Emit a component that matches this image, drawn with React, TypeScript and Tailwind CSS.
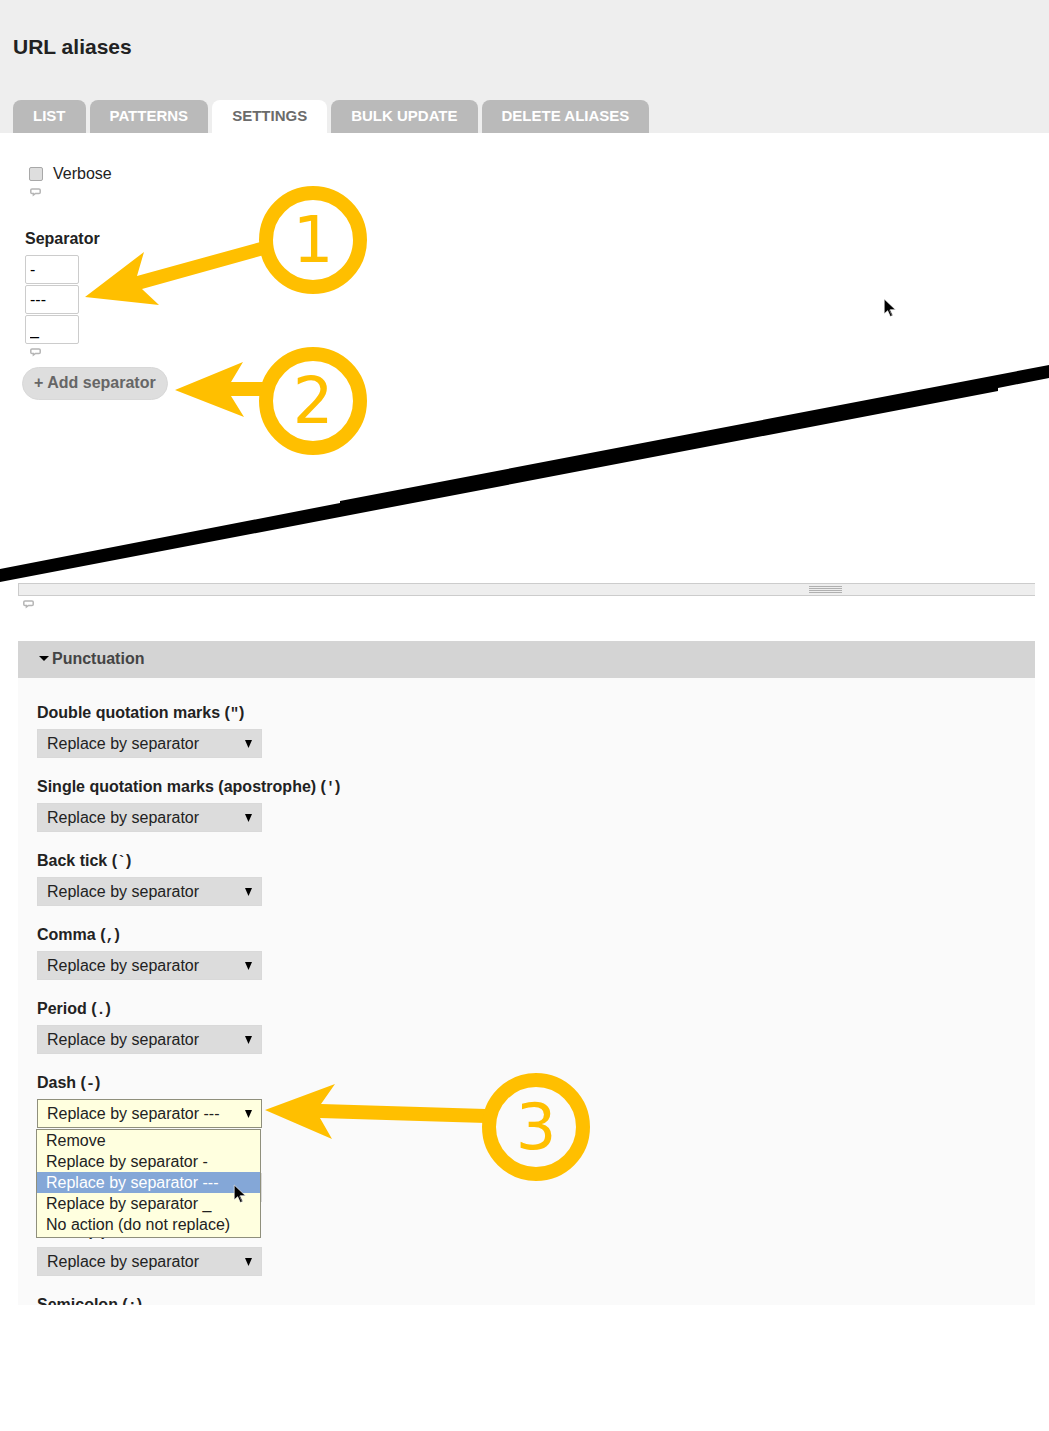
import { useState } from 'react';

const TABS = ['List', 'Patterns', 'Settings', 'Bulk update', 'Delete aliases'];

const OPTIONS = [
    'Remove',
    'Replace by separator',
    'Replace by separator -',
    'Replace by separator ---',
    'Replace by separator _',
    'No action (do not replace)',
];

const DASH_OPTIONS = OPTIONS.filter((option) => option !== 'Replace by separator');

const FIELDS = [
    { id: 'double-quotes', name: 'Double quotation marks', mark: '"' },
    { id: 'quotes', name: 'Single quotation marks (apostrophe)', mark: "'" },
    { id: 'backtick', name: 'Back tick', mark: '`' },
    { id: 'comma', name: 'Comma', mark: ',' },
    { id: 'period', name: 'Period', mark: '.' },
    { id: 'dash', name: 'Dash', mark: '-' },
    { id: 'underscore', name: 'Underscore', mark: '_' },
    { id: 'colon', name: 'Colon', mark: ':' },
];

function Bubble() {
    return (
        <svg className="block h-[9px] w-[11px]" viewBox="0 0 11 9" fill="none" stroke="#b5b5b5" strokeWidth="1.5" aria-hidden="true">
            <path d="M2 1h7q1.200 0 1.200 1v2.400q0 1-1.200 1H5.500L3.400 7V5.400H2q-1.200 0-1.200-1V2q0-1 1.200-1z" />
        </svg>
    );
}

function Pointer() {
    return (
        <svg className="block h-5 w-3.5" viewBox="0 0 13 19" aria-hidden="true">
            <path d="M1 1v14l3.300-3 2.500 5.600 2.400-1.100-2.500-5.400h5z" fill="#000" stroke="#fff" strokeWidth="0.600" />
            <path d="M6 11.500l2.200 5" stroke="#777" strokeWidth="0.800" />
        </svg>
    );
}

function Callout({ cx, cy, label, arrow }: { cx: number; cy: number; label: string; arrow: string }) {
    return (
        <g>
            <polygon points={arrow} fill="#ffbf00" />
            <circle cx={cx} cy={cy} r="47" fill="none" stroke="#ffbf00" strokeWidth="14" />
            <text x={cx} y={cy + 22} textAnchor="middle" className="font-['DejaVu_Sans',sans-serif] text-[64px]" fill="#ffbf00">
                {label}
            </text>
        </g>
    );
}

function MarkLabel({ id, name, mark }: { id: string; name: string; mark: string }) {
    return (
        <label htmlFor={id} className="block font-bold leading-[22px] text-[#222]">
            {name} (<code className="font-['Liberation_Mono',monospace] text-[15px] leading-none">{mark}</code>)
        </label>
    );
}

function Field({ id, name, mark }: { id: string; name: string; mark: string }) {
    const isOpen = id === 'dash';
    const [value, setValue] = useState(isOpen ? 'Replace by separator ---' : 'Replace by separator');

    return (
        <div className="relative">
            <MarkLabel id={id} name={name} mark={mark} />
            <div className="relative mt-[5px] w-[225px]">
                <select
                    id={id}
                    value={value}
                    onChange={(e) => setValue(e.target.value)}
                    className={
                        isOpen
                            ? 'block h-[29px] w-full appearance-none border border-[#8f8f7c] bg-[#ffffdf] pl-[9px] text-[#222] outline-none'
                            : 'block h-[29px] w-full appearance-none border border-[#d9d9d9] bg-[#dcdcdc] pl-[9px] text-[#222] outline-none'
                    }
                >
                    {OPTIONS.map((option) => (
                        <option key={option}>{option}</option>
                    ))}
                </select>
                <svg className="pointer-events-none absolute top-[11px] right-[10px] h-2 w-[7px]" viewBox="0 0 7 8" aria-hidden="true">
                    <path d="M0 0h7L3.500 8z" fill="#000" />
                </svg>
            </div>
            {isOpen && (
                <>
                    <ul role="listbox" aria-label="Dash" className="absolute top-full -left-px z-10 mt-px w-[225px] border border-[#8f8f7c] bg-[#ffffdf] pb-0.5">
                        {DASH_OPTIONS.map((option) => (
                            <li
                                key={option}
                                role="option"
                                aria-selected={option === value}
                                className={
                                    option === value
                                        ? 'bg-[#84a7d7] pl-[9px] leading-[21px] whitespace-nowrap text-white'
                                        : 'pl-[9px] leading-[21px] whitespace-nowrap text-[#222]'
                                }
                            >
                                {option}
                            </li>
                        ))}
                    </ul>
                    <div className="absolute top-[112px] left-[196px] z-20">
                        <Pointer />
                    </div>
                    <svg className="absolute -top-[5px] left-[223px] h-[120px] w-[340px]" viewBox="260 1067 340 120">
                        <Callout
                            cx={536}
                            cy={1127}
                            label="3"
                            arrow="265,1110 335,1084 321,1104 486,1109 486,1123 320,1118 332,1139"
                        />
                    </svg>
                </>
            )}
        </div>
    );
}

export default function App() {
    const [separators, setSeparators] = useState(['-', '---', '_']);
    const [open, setOpen] = useState(true);

    return (
        <div className="min-h-screen overflow-x-hidden bg-white font-['Liberation_Sans',Arial,sans-serif] text-base text-[#222]">
            <header className="bg-[#eee] px-[13px] pt-[33px]">
                <h1 className="text-[21px] leading-7 font-bold">URL aliases</h1>
                <nav className="mt-[39px] flex gap-1">
                    {TABS.map((tab) => (
                        <a
                            key={tab}
                            href="#"
                            className={
                                tab === 'Settings'
                                    ? 'h-[33px] rounded-t-lg bg-white px-5 text-[15px] leading-8 font-bold text-[#6b6b6b] uppercase'
                                    : 'h-[33px] rounded-t-lg bg-[#bababa] px-5 text-[15px] leading-8 font-bold text-white uppercase'
                            }
                        >
                            {tab}
                        </a>
                    ))}
                </nav>
            </header>

            <main className="relative">
                <section className="px-[25px] pt-[30px]">
                    <div className="flex items-center pl-1">
                        <input
                            id="verbose"
                            type="checkbox"
                            className="h-3.5 w-3.5 appearance-none rounded-xs border border-[#a8a8a8] bg-[#dedede] checked:bg-[#777]"
                        />
                        <label htmlFor="verbose" className="pl-2.5 leading-[22px]">
                            Verbose
                        </label>
                    </div>
                    <div className="mt-[3px] pl-[5px]">
                        <Bubble />
                    </div>

                    <fieldset className="mt-[31px]">
                        <legend className="leading-[22px] font-bold">Separator</legend>
                        <div className="mt-[5px] flex flex-col gap-px">
                            {separators.map((separator, i) => (
                                <input
                                    key={i}
                                    type="text"
                                    aria-label={`Separator ${i + 1}`}
                                    value={separator}
                                    onChange={(e) => setSeparators(separators.map((s, j) => (j === i ? e.target.value : s)))}
                                    className="h-[29px] w-[54px] rounded-xs border border-[#ccc] bg-white px-1 text-black"
                                />
                            ))}
                        </div>
                        <div className="mt-1 pl-[5px]">
                            <Bubble />
                        </div>
                    </fieldset>
                    <button
                        type="button"
                        onClick={() => setSeparators([...separators, ''])}
                        className="mt-2.5 -ml-[3px] block h-[33px] rounded-full border border-[#d8d8d8] bg-[#dedede] px-[11px] pb-0.5 font-bold text-[#666]"
                    >
                        + Add separator
                    </button>
                </section>

                <svg className="absolute top-[47px] left-20 h-[280px] w-[300px]" viewBox="80 180 300 280">
                    <Callout cx={313} cy={240} label="1" arrow="85,297 144,252 137,276 264,241 264,255 142,289 159,305" />
                    <Callout cx={313} cy={401} label="2" arrow="175,390 243,362 231,382 264,382 264,396 231,396 244,417" />
                </svg>
                <div className="absolute top-[165px] right-[152px]">
                    <Pointer />
                </div>
                <svg className="absolute top-[232px] left-0 h-[217px] w-full" viewBox="0 365 1049 217" preserveAspectRatio="none" aria-hidden="true">
                    <polygon points="0,569 340,503 340,501 1049,365 1049,378 998,388 998,391 0,582" fill="#000" />
                </svg>

                <section className="mt-[183px] mr-3.5 ml-[18px]">
                    <div className="flex h-[13px] items-center justify-end border border-r-0 border-[#ccc] bg-[#eee] pr-[193px]">
                        <div className="flex w-[33px] flex-col gap-px">
                            <div className="h-px bg-[#b0b0b0]" />
                            <div className="h-px bg-[#b0b0b0]" />
                            <div className="h-px bg-[#b0b0b0]" />
                            <div className="h-px bg-[#b0b0b0]" />
                        </div>
                    </div>
                    <div className="mt-1 pl-[5px]">
                        <Bubble />
                    </div>

                    <div className="mt-8">
                        <button
                            type="button"
                            aria-expanded={open}
                            onClick={() => setOpen(!open)}
                            className="flex h-[37px] w-full items-center gap-[3px] bg-[#d4d4d4] pb-0.5 pl-[21px] font-bold text-[#444]"
                        >
                            <svg className="h-[5px] w-2.5" viewBox="0 0 10 5" aria-hidden="true">
                                <path d="M0 0h10L5 5z" fill="#000" />
                            </svg>
                            Punctuation
                        </button>
                        {open && (
                            <div className="bg-[#fafafa] px-[19px] pt-6">
                                <div className="flex flex-col gap-[18px]">
                                    {FIELDS.map((field) => (
                                        <Field key={field.id} id={field.id} name={field.name} mark={field.mark} />
                                    ))}
                                    <div className="h-[11px] overflow-hidden">
                                        <MarkLabel id="semicolon" name="Semicolon" mark=";" />
                                    </div>
                                </div>
                            </div>
                        )}
                    </div>
                </section>
            </main>
        </div>
    );
}
